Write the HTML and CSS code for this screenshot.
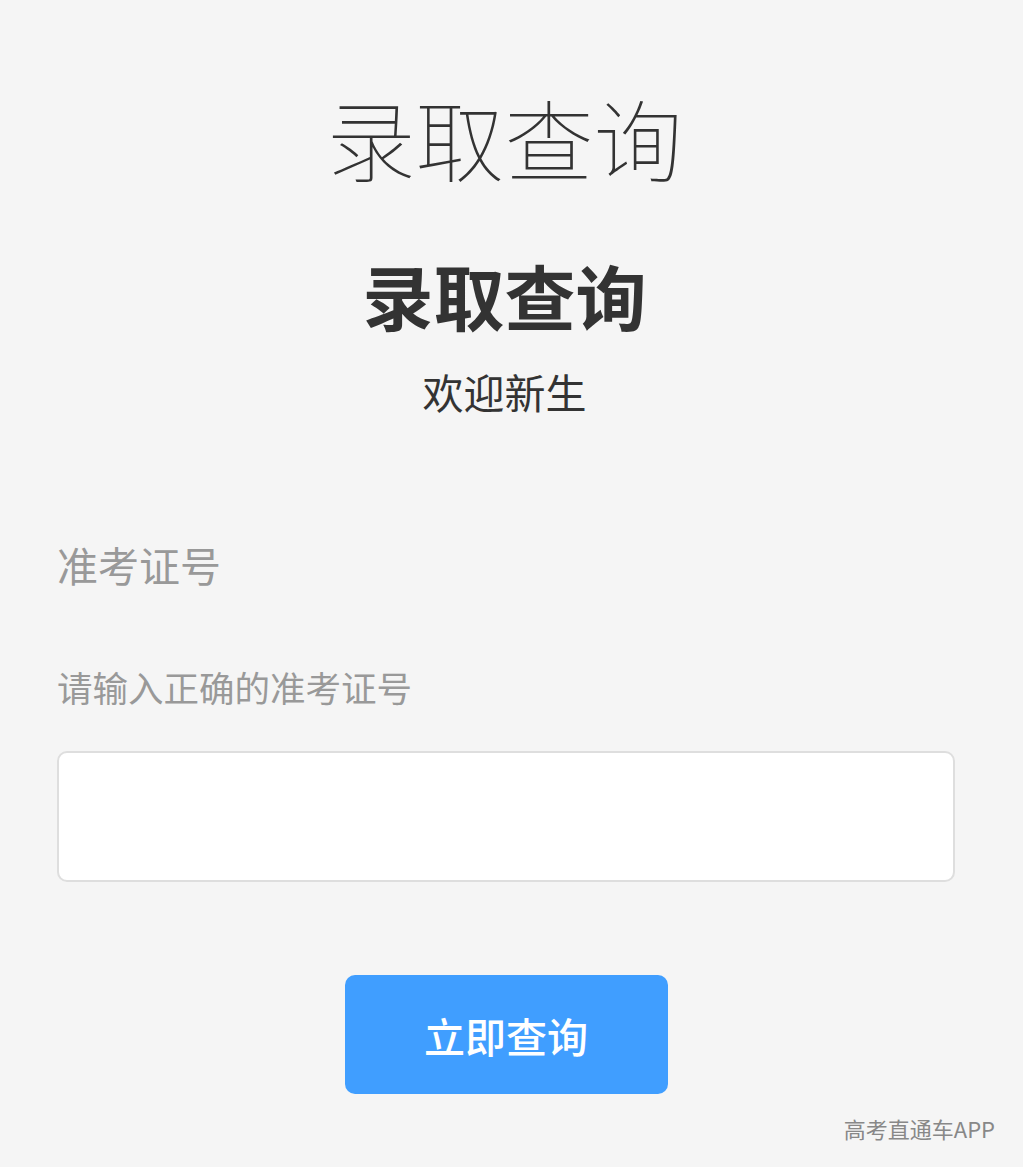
FILE: index.html
```html
<!DOCTYPE html>
<html lang="zh-CN">
<head>
  <meta charset="UTF-8" />
  <meta name="viewport" content="width=device-width, initial-scale=1.0"/>
  <title>录取查询</title>
  <link rel="stylesheet" href="styles.css">
</head>
<body>

  <div class="pagina">
    <div class="cabecalho">
      <h1 class="titulo-fino">录取查询</h1>
      <h2 class="titulo">录取查询</h2>
      <p class="subtitulo">欢迎新生</p>
    </div>

    <form class="formulario">
      <label class="rotulo" for="numero">准考证号</label>
      <p class="dica">请输入正确的准考证号</p>
      <input id="numero" class="campo" type="text" name="numero">
      <button type="button" class="botao">立即查询</button>
    </form>

    <div class="rodape">高考直通车APP</div>
  </div>

</body>
</html>
```

FILE: styles.css
```css
body {
  margin: 0;
  background: #f5f5f5;
  font-family: "Noto Sans CJK SC", "Noto Sans", sans-serif;
}

.pagina {
  width: 1023px;
  height: 1167px;
  box-sizing: border-box;
  padding-top: 82px;
  display: flex;
  flex-direction: column;
}

.cabecalho {
  padding-right: 14px;
  display: flex;
  flex-direction: column;
  align-items: center;
}

.titulo-fino {
  margin: 0;
  font-size: 89px;
  font-weight: 100;
  line-height: 110px;
  color: #333;
}

.titulo {
  margin: 57px 0 0;
  font-size: 71px;
  font-weight: 700;
  line-height: 90px;
  color: #333;
}

.subtitulo {
  margin: 24px 0 0;
  font-size: 41px;
  line-height: 56px;
  color: #333;
}

.formulario {
  margin-top: 117px;
  padding: 0 68px 0 57px;
  display: flex;
  flex-direction: column;
}

.rotulo {
  font-size: 41px;
  line-height: 56px;
  color: #999;
}

.dica {
  margin: 71px 0 0;
  font-size: 35.5px;
  line-height: 48px;
  color: #999;
}

.campo {
  margin-top: 40px;
  height: 131px;
  box-sizing: border-box;
  border: 2px solid #dedede;
  border-radius: 10px;
  background: #fff;
  font-size: 35px;
  padding: 0 20px;
}

.botao {
  align-self: center;
  margin-top: 93px;
  width: 323px;
  height: 119px;
  border: none;
  border-radius: 10px;
  background: #409eff;
  color: #fff;
  font-family: inherit;
  font-size: 41px;
  font-weight: 500;
}

.rodape {
  align-self: flex-end;
  margin: 18px 28px 0 0;
  font-size: 22px;
  color: #888;
}
```
